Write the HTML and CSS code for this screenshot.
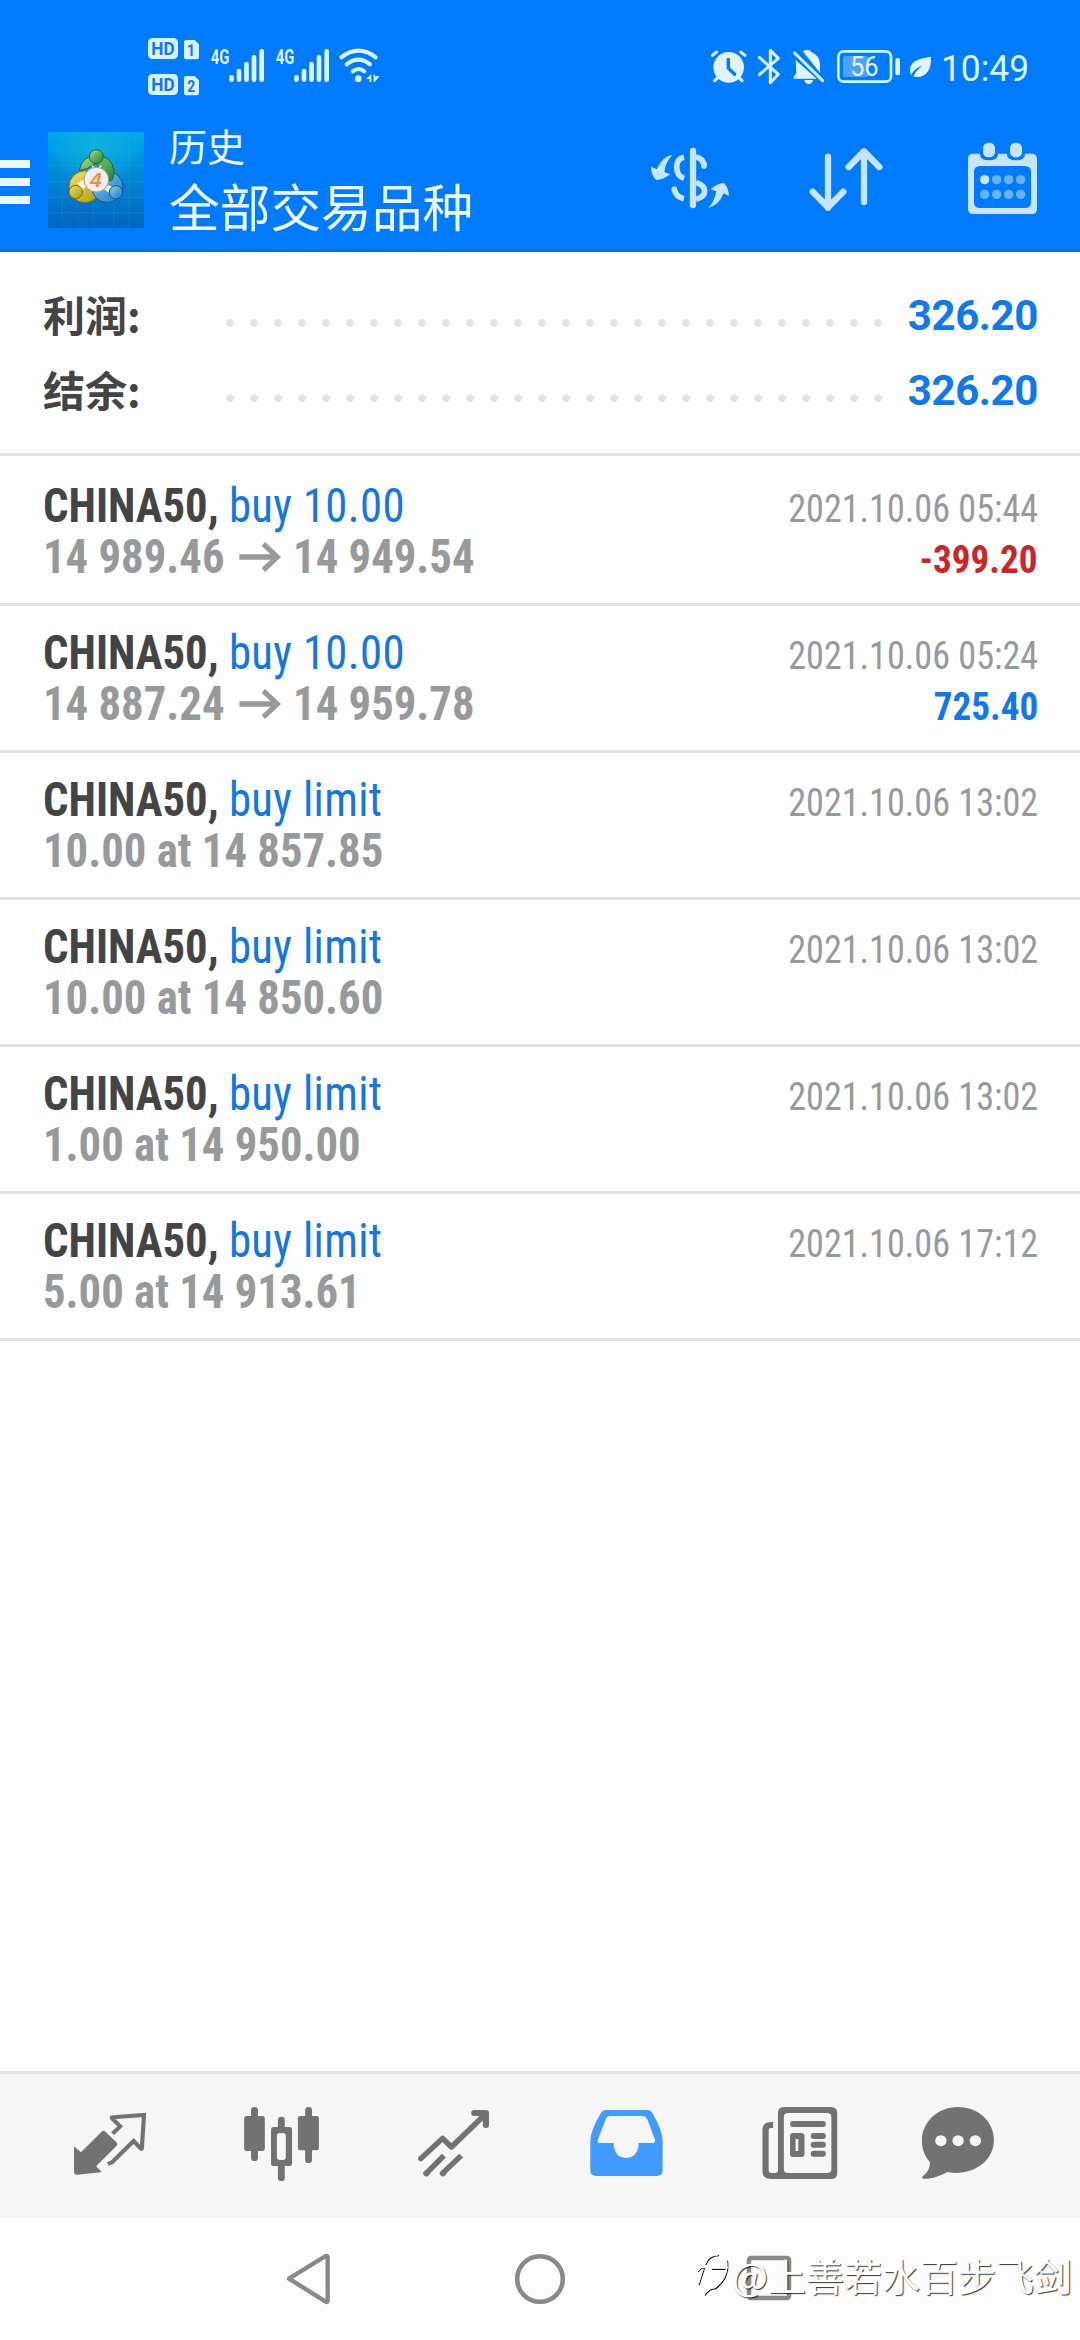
FILE: index.html
```html
<!DOCTYPE html>
<html lang="zh-CN">
<head>
<meta charset="utf-8">
<title>历史</title>
<link rel="stylesheet" href="styles.css">
</head>
<body>
<div class="screen">
  <header class="top">
    <div class="status">
      <svg class="st-hd" width="53" height="60" viewBox="51 51 159 180">
        <g fill="#d9f1ff"><rect x="54" y="54" width="90" height="63" rx="14"/><rect x="54" y="162" width="90" height="63" rx="14"/>
        <path d="M170 60h24l13 13v38q0 7-7 7h-30q-8 0-8-7V67q0-7 8-7zM170 168h24l13 13v38q0 7-7 7h-30q-8 0-8-7v-44q0-7 8-7z"/></g>
        <g fill="#1478e6" class="st-bold" text-anchor="middle"><text x="99" y="105" font-size="54" textLength="70" lengthAdjust="spacingAndGlyphs">HD</text><text x="99" y="213" font-size="54" textLength="70" lengthAdjust="spacingAndGlyphs">HD</text><text x="183" y="107" font-size="48" textLength="24" lengthAdjust="spacingAndGlyphs">1</text><text x="184" y="216" font-size="48" textLength="24" lengthAdjust="spacingAndGlyphs">2</text></g>
      </svg>
      <svg class="st-signal" width="55" height="35" viewBox="240 84 165 105">
        <text x="242" y="131" font-size="58" class="st-bold" fill="#d9f1ff" textLength="56" lengthAdjust="spacingAndGlyphs">4G</text>
        <path d="M304.500 172v7M327 153v26M349.500 132v47M372 112v67M395 94v85" stroke="#d9f6ff" stroke-width="14" stroke-linecap="round"/>
      </svg>
      <svg class="st-signal" width="55" height="35" viewBox="240 84 165 105">
        <text x="242" y="131" font-size="58" class="st-bold" fill="#d9f1ff" textLength="56" lengthAdjust="spacingAndGlyphs">4G</text>
        <path d="M304.500 172v7M327 153v26M349.500 132v47M372 112v67M395 94v85" stroke="#d9f6ff" stroke-width="14" stroke-linecap="round"/>
      </svg>
      <svg class="st-wifi" width="43" height="36" viewBox="624 81 129 108">
        <g fill="none" stroke="#d9f6ff" stroke-width="12" stroke-linecap="round"><path d="M634 112q51-40 103 0M650 133q35-28 70 0M668 154q18-14 35 0"/></g>
        <circle cx="685" cy="176" r="10" fill="#d9f6ff"/><path d="M708 177l16-15v24h-5v-9zM731 163h3v6l15-1-15 18h-3z" fill="#d9f6ff"/>
      </svg>
      <div class="st-right">
        <svg class="st-alarm" width="37" height="36" viewBox="57 57 111 108">
          <g fill="none" stroke="#e0f3ff" stroke-width="9" stroke-linecap="round"><path d="M64 76l13-10M162 76l-13-10M78 145l-7 7M146 145l7 7"/></g>
          <circle cx="113" cy="112" r="46" fill="#e0f3ff"/><path d="M112 88v27l19 18" fill="none" stroke="#007aff" stroke-width="10" stroke-linecap="round" stroke-linejoin="round"/>
        </svg>
        <svg class="st-bt" width="24" height="37" viewBox="198 54 72 111">
          <path d="M205 82l57 51-24 25V61l24 24-57 49" fill="none" stroke="#d9f6ff" stroke-width="9" stroke-linecap="round" stroke-linejoin="round"/>
        </svg>
        <svg class="st-bell" width="33" height="36" viewBox="303 57 99 108">
          <path d="M335 64q5-5 13-5 9 0 13 7 24 9 26 36v26zM314 90l63 56h-69v-5l8-12zM340 150h26q-3 12-13 12t-13-12z" fill="#e0f6ff"/><path d="M311 69l84 83" stroke="#d9f6ff" stroke-width="9" stroke-linecap="round"/>
        </svg>
        <svg class="st-battery" width="66" height="35" viewBox="435 57 198 105">
          <rect x="442" y="64" width="158" height="91" rx="16" fill="none" stroke="#cdf7ff" stroke-width="8"/>
          <rect x="456" y="78" width="78" height="63" rx="7" fill="#4ba3ff"/><rect x="613" y="84" width="14" height="52" rx="6" fill="#d9f6ff"/>
          <text x="520" y="138" font-size="82" class="st-text" fill="#e0f6ff" text-anchor="middle" textLength="86" lengthAdjust="spacingAndGlyphs">56</text>
        </svg>
        <svg class="st-leaf" width="23" height="24" viewBox="654 75 69 72">
          <path d="M720 80c2 40-16 67-53 60q9-21 28-33-22 5-35 28c-10-36 12-48 60-55z" fill="#e0f6ff"/>
        </svg>
        <svg class="st-time" width="87" height="30" viewBox="0 0 87 30"><text x="-1" y="28" font-size="37" class="st-text" fill="#d9f6ff" textLength="88" lengthAdjust="spacingAndGlyphs">10:49</text></svg>
      </div>
    </div>
    <div class="appbar">
      <div class="menu"><i></i><i></i><i></i></div>
      <svg class="logo" width="96" height="96" viewBox="144 66 288 288">
        <defs>
          <linearGradient id="sky" x1="0" y1="0" x2="0" y2="1"><stop offset="0" stop-color="#00a8ed"/><stop offset=".55" stop-color="#0081d2"/><stop offset="1" stop-color="#0064c0"/></linearGradient>
          <radialGradient id="glow"><stop offset="0" stop-color="#12b5dc" stop-opacity=".85"/><stop offset="1" stop-color="#12b5dc" stop-opacity="0"/></radialGradient>
          <linearGradient id="green" x1="0" y1="0" x2="1" y2="1"><stop offset="0" stop-color="#a5dc8c"/><stop offset="1" stop-color="#178232"/></linearGradient>
          <linearGradient id="gold" x1="0" y1="0" x2="1" y2="1"><stop offset="0" stop-color="#f0e66e"/><stop offset="1" stop-color="#ae970c"/></linearGradient>
          <linearGradient id="blue" x1="0" y1="0" x2="1" y2="1"><stop offset="0" stop-color="#8ed4f5"/><stop offset="1" stop-color="#1474c0"/></linearGradient>
        </defs>
        <rect x="144" y="66" width="288" height="288" fill="url(#sky)"/><ellipse cx="288" cy="120" rx="140" ry="110" fill="url(#glow)"/>
        <path d="M186 66v288M233 66v288M280 66v288M342 66v288M387 66v288M144 122h288M144 168h288M144 215h288M144 262h288M144 308h288" stroke="#4ac1e8" stroke-opacity=".25" stroke-width="2"/>
        <g stroke-width="3">
          <circle cx="255" cy="230" r="48" fill="url(#gold)" stroke="#796911"/>
          <circle cx="322" cy="231" r="47" fill="url(#blue)" stroke="#17527f"/>
          <path d="M238 181q7-43 51-45 46 2 53 44 1 29-12 34l-17-27-25-27-27 16z" fill="url(#green)" stroke="#286528"/>
          <path d="M275 165l14 10 16-10-6 25h-19zM232 219l19-10 8 21-12 9zM324 226l17 6-16 15-13-9z" fill="#f5f5df" stroke="none"/>
          <circle cx="289" cy="140" r="21" fill="url(#green)" stroke="#286528"/>
          <circle cx="227" cy="246" r="20" fill="url(#gold)" stroke="#796911"/>
          <circle cx="348" cy="247" r="20" fill="url(#blue)" stroke="#17527f"/>
          <circle cx="289" cy="209" r="37" fill="#f1efed" stroke="#9e988b"/>
        </g>
        <text x="288" y="231" class="logo-num" text-anchor="middle">4</text>
      </svg>
      <div class="titles"><div class="sub">历史</div><div class="main">全部交易品种</div></div>
      <svg class="ic-dollar" width="80" height="62" viewBox="60 81 240 186">
        <g fill="none" stroke="#c8e5ff"><path d="M189 93v162" stroke-width="19" stroke-linecap="round"/><path d="M162 112q-22 5-22 29 0 26 22 34M198 111q20 3 25 26M133 209q5 22 29 27M198 187q26 9 26 27 0 16-26 24" stroke-width="17"/><path d="M222 133v5M133 208v2" stroke-width="17" stroke-linecap="round"/></g>
        <path d="M127 105q-29 3-47 43l-17-8q1 28 16 40 20 0 41-17l-17-7q4-30 24-51zM234 264q17-13 25-50l-18-6q21-18 41-19 13 12 15 38l-16-7q-15 37-47 44z" fill="#c8e5ff"/>
      </svg>
      <svg class="ic-sort" width="74" height="64" viewBox="537 81 222 192">
        <path d="M594 110v153M548 215l46 47 46-47M702 246V94M656 141l46-47 46 47" fill="none" stroke="#c8e5ff" stroke-width="19" stroke-linecap="round" stroke-linejoin="round"/>
      </svg>
      <svg class="ic-cal" width="71" height="73" viewBox="1011 66 213 219">
        <path fill-rule="evenodd" d="M1030 101h175q16 0 16 16v149q0 16-16 16h-175q-16 0-16-16V117q0-16 16-16zM1050 138q-18 0-18 18v90q0 18 18 18h134q19 0 19-18v-90q0-18-19-18z" fill="#c8e5ff"/>
        <path d="M1050 96v7q0 18 27 18t27-18v-7zM1131 96v7q0 18 27 18t27-18v-7z" fill="#007aff"/>
        <rect x="1059" y="68" width="36" height="44" rx="16" fill="#c8e5ff"/><rect x="1140" y="68" width="36" height="44" rx="16" fill="#c8e5ff"/>
        <g fill="#69b2ff"><circle cx="1064" cy="179" r="14" fill="#c8e5ff"/><circle cx="1100" cy="179" r="14"/><circle cx="1136" cy="179" r="14"/><circle cx="1172" cy="179" r="14"/><circle cx="1064" cy="223" r="14"/><circle cx="1100" cy="223" r="14"/><circle cx="1136" cy="223" r="14"/><circle cx="1172" cy="223" r="14"/></g>
      </svg>
    </div>
  </header>

  <section class="summary">
    <div class="sum-row"><span class="sum-label">利润:</span><span class="dots"></span><span class="sum-val">326.20</span></div>
    <div class="sum-row"><span class="sum-label">结余:</span><span class="dots"></span><span class="sum-val">326.20</span></div>
  </section>

  <main class="list">
    <article class="deal first"><div class="line"><span class="what"><b>CHINA50,</b> <em>buy 10.00</em></span><time>2021.10.06 05:44</time></div><div class="line"><span class="price">14 989.46 <svg class="arr" width="47" height="30" viewBox="0 0 47 30"><path d="M1 15h41M27 2l15 13-15 13" fill="none" stroke="#97999b" stroke-width="5.500"/></svg> 14 949.54</span><span class="pl loss">-399.20</span></div></article>
    <article class="deal"><div class="line"><span class="what"><b>CHINA50,</b> <em>buy 10.00</em></span><time>2021.10.06 05:24</time></div><div class="line"><span class="price">14 887.24 <svg class="arr" width="47" height="30" viewBox="0 0 47 30"><path d="M1 15h41M27 2l15 13-15 13" fill="none" stroke="#97999b" stroke-width="5.500"/></svg> 14 959.78</span><span class="pl">725.40</span></div></article>
    <article class="deal"><div class="line"><span class="what"><b>CHINA50,</b> <em>buy limit</em></span><time>2021.10.06 13:02</time></div><div class="line"><span class="price">10.00 at 14 857.85</span></div></article>
    <article class="deal"><div class="line"><span class="what"><b>CHINA50,</b> <em>buy limit</em></span><time>2021.10.06 13:02</time></div><div class="line"><span class="price">10.00 at 14 850.60</span></div></article>
    <article class="deal"><div class="line"><span class="what"><b>CHINA50,</b> <em>buy limit</em></span><time>2021.10.06 13:02</time></div><div class="line"><span class="price">1.00 at 14 950.00</span></div></article>
    <article class="deal"><div class="line"><span class="what"><b>CHINA50,</b> <em>buy limit</em></span><time>2021.10.06 17:12</time></div><div class="line"><span class="price">5.00 at 14 913.61</span></div></article>
  </main>

  <nav class="tabs">
    <svg width="90" height="80" preserveAspectRatio="none" viewBox="188.700 162 261.300 240">
      <path d="M215 291q3-1 5 2l15 14 60-62q5-5 11 0l32 32q5 6 0 11l-59 61 14 14q2 3-1 4l-67 7q-10 1-10-9z" fill="#727272"/>
      <path d="M327 251l22-22-23-23q-4-4 2-4l90-7-6 99q0 5-4 1l-20-22-63 64-12 5" fill="none" stroke="#727272" stroke-width="12"/>
    </svg>
    <svg width="90" height="80" preserveAspectRatio="none" viewBox="688.200 162 261.300 240">
      <path d="M739 181v142M896 181v148M817 210v30M817 340v43" stroke="#727272" stroke-width="20" stroke-linecap="round"/>
      <rect x="709" y="198" width="60" height="105" rx="7" fill="#727272"/><rect x="865" y="198" width="61" height="103" rx="7" fill="#727272"/>
      <path fill-rule="evenodd" d="M794 231h47q7 0 7 7v103q0 7-7 7h-47q-7 0-7-7V238q0-7 7-7zM813 249q-9 0-9 9v63q0 9 9 9h8q9 0 9-9v-63q0-9-9-9z" fill="#727272"/>
    </svg>
    <svg width="90" height="80" preserveAspectRatio="none" viewBox="1187.600 162 261.300 240">
      <g fill="none" stroke="#727272" stroke-width="16" stroke-linejoin="round"><path d="M1222 326l63-61 26 26 99-99" stroke-linecap="round"/><path d="M1377 189h34v36" stroke-width="18" stroke-linecap="round"/><path d="M1289 317l-49 51M1339 317l-52 51"/><path d="M1238 370l1-1M1286 370l1-1" stroke-linecap="round" stroke-width="18"/></g>
    </svg>
    <svg width="90" height="80" preserveAspectRatio="none" viewBox="119 162 261.300 240">
      <path fill-rule="evenodd" d="M190 180h122q10 0 16 12 28 51 28 82v87q0 17-17 17H163q-17 0-17-17v-87q0-31 29-82 6-12 15-12zM205 198q-10 0-14 9l-23 62q-2 10 7 10h39v10q5 34 36 35 31-1 36-35v-10h39q11 0 9-10l-22-60q-4-11-17-11z" fill="#439aff"/>
    </svg>
    <svg width="90" height="80" preserveAspectRatio="none" viewBox="624.300 162 261.300 240">
      <path fill-rule="evenodd" d="M708 171h137q18 0 18 18v180q0 18-18 18H670q-24 0-24-24V240q0-24 24-24h7v18h-7q-6 0-6 6v121q0 8 8 8h10q9 0 9-9V189q0-18 17-18zM720 189q-12 0-12 12v156q0 12 12 12h114q12 0 12-12V201q0-12-12-12z" fill="#727272"/>
      <g fill="none" stroke="#727272" stroke-width="18" stroke-linecap="round"><path d="M735 222h86M795 258h26M795 284h26M795 311h26"/></g>
      <path fill-rule="evenodd" d="M735 249h24q9 0 9 9v54q0 9-9 9h-24q-9 0-9-9v-54q0-9 9-9zM742 267v36h8v-36z" fill="#727272"/>
    </svg>
    <svg width="90" height="80" preserveAspectRatio="none" viewBox="1083 162 261.300 240">
      <path d="M1213 171c60 0 105 44 105 99 0 67-67 110-136 96-21 13-51 23-70 20q-5-2 0-8 21-15 20-42c-15-18-24-40-23-66 0-53 46-99 104-99z" fill="#727272"/>
      <g fill="#f6f6f6"><circle cx="1164" cy="272" r="16.500"/><circle cx="1214" cy="272" r="16.500"/><circle cx="1264" cy="272" r="16.500"/></g>
    </svg>
  </nav>

  <footer class="sysnav">
    <svg class="back" width="46" height="52" viewBox="138 99 138 156"><path d="M147 176l110-68q6-2 6 3v131q0 6-6 3z" fill="none" stroke="#898989" stroke-width="13" stroke-linejoin="round"/></svg>
    <svg class="home" width="52" height="52" viewBox="0 0 52 52"><circle cx="26" cy="26" r="22.800" fill="none" stroke="#898989" stroke-width="4.500"/></svg>
    <svg class="recent" width="46" height="46" viewBox="0 0 46 46"><rect x="3" y="3" width="40" height="40" rx="2" fill="none" stroke="#898989" stroke-width="4.500"/></svg>
    <div class="mark">
      <svg width="34" height="44" viewBox="51 123 102 132"><g fill="none"><path d="M57 178l8-9h12M74 172l-15 46M80 157q9-27 39-27M98 171h49M144 145q8 53-35 84-17 0-32 20" stroke="#111" stroke-width="4" transform="translate(1 1)"/><path d="M57 175l8-9h12M72 171l-15 46M78 155q9-27 39-27M98 167h49M142 145q8 50-35 81-17 0-32 20" stroke="#fff" stroke-width="5"/></g></svg>
      <span>@上善若水百步飞剑</span>
    </div>
  </footer>
</div>
</body>
</html>
```

FILE: styles.css
```css
* { box-sizing: border-box; }
body { margin: 0; background: #fff; }
svg { display: block; flex: none; }
.screen { width: 1080px; height: 2340px; display: flex; flex-direction: column; background: #fefefe; font-family: "Roboto Condensed", Roboto, "Noto Sans CJK SC", sans-serif; overflow: hidden; }

.top { height: 252px; flex: none; background: #007aff; border-bottom: 3px solid #0a6bdc; }
.status { height: 125px; padding: 37px 51px 0 147px; display: flex; align-items: flex-start; }
.status svg { overflow: visible; }
.st-bold { font-family: Roboto, sans-serif; font-weight: 700; }
.st-text { font-family: Roboto, sans-serif; font-weight: 400; }
.st-signal { margin: 11px 0 0 10px; }
.st-wifi { margin: 10px 0 0 8px; }
.st-right { display: flex; align-items: flex-start; margin-left: auto; padding-top: 11px; }
.st-alarm { margin: 1px 10px 0 0; }
.st-bt { margin-right: 11px; }
.st-bell { margin: 1px 11px 0 0; }
.st-battery { margin: 1px 7px 0 0; }
.st-leaf { margin: 7px 10px 0 0; }
.st-time { margin-top: 5px; }

.appbar { height: 124px; display: flex; align-items: flex-start; padding-right: 42px; }
.menu { width: 30px; margin: 35px 18px 0 0; display: grid; gap: 10px; }
.menu i { height: 8px; background: #e8f9ff; }
.logo { margin: 7px 25px 0 0; overflow: hidden; }
.logo-num { font: italic 700 62px "Liberation Sans", sans-serif; fill: #f18b45; }
.titles { color: #eafaff; font-family: "Noto Sans CJK SC", sans-serif; white-space: nowrap; margin: -3px auto 0 0; }
.sub { font-size: 38px; line-height: 46px; }
.main { font-size: 50.7px; line-height: 60px; margin-top: 7px; }
.ic-dollar { margin-top: 22px; }
.ic-sort { margin: 22px 0 0 79px; }
.ic-cal { margin: 17px 0 0 84px; }

.summary { flex: none; height: 204px; padding: 26px 42px 0 43px; border-bottom: 3px solid #e2e4e3; }
.sum-row { height: 75px; display: flex; align-items: center; }
.sum-label { width: 183px; margin-top: -4px; font: 700 42px "Noto Sans CJK SC", sans-serif; color: #444; }
.dots { width: 656px; height: 8px; margin-top: 15px; background: radial-gradient(circle at 4px 4px, #e3e3e3 3.500px, transparent 4.200px) 0 0 / 24px 8px repeat-x; }
.sum-val { margin-left: auto; font: 700 42px Roboto, sans-serif; color: #0f78ea; letter-spacing: -.4px; }

.list { flex: 1; }
.deal { height: 147px; padding: 21px 42px 0 43px; border-bottom: 3px solid #e2e4e3; }
.deal.first { height: 150px; padding-top: 24px; }
.line { height: 51px; display: flex; justify-content: space-between; align-items: baseline; line-height: 51px; font-stretch: 75%; white-space: nowrap; }
.what, .price { font-size: 48.5px; transform: scaleX(.922); transform-origin: left; }
.what { color: #444; }
.what em { font-style: normal; color: #1676df; letter-spacing: .4px; }
.price { font-weight: 700; color: #97999b; }
.arr { display: inline-block; margin: 0 1px 0 4px; vertical-align: 1px; }
time { font-size: 39.5px; color: #97999b; transform: scaleX(.915); transform-origin: right; }
.pl { font-size: 39.5px; font-weight: 700; color: #0f78ea; transform: scaleX(.94); transform-origin: right; }
.pl.loss { color: #c62828; }

.tabs { flex: none; height: 147px; background: #f6f6f6; border-top: 3px solid #e4e4e4; padding: 30px 0 0 65px; display: flex; gap: 82px; }
.tabs svg:nth-child(5) { margin-left: 2px; }
.tabs svg:nth-child(6) { margin-left: -14px; }

.sysnav { flex: none; height: 122px; background: #fdfdfd; position: relative; display: flex; align-items: flex-start; padding: 35px 0 0 286px; }
.home { margin-left: 182px; }
.recent { margin: 2px 0 0 180px; }
.mark { position: absolute; right: 8px; top: 35px; display: flex; align-items: center; gap: 2px; color: #fff; font: 38px/44px "Noto Sans CJK SC", sans-serif; text-shadow: 1px 1px 1px rgba(0, 0, 0, .8); white-space: nowrap; }
```
